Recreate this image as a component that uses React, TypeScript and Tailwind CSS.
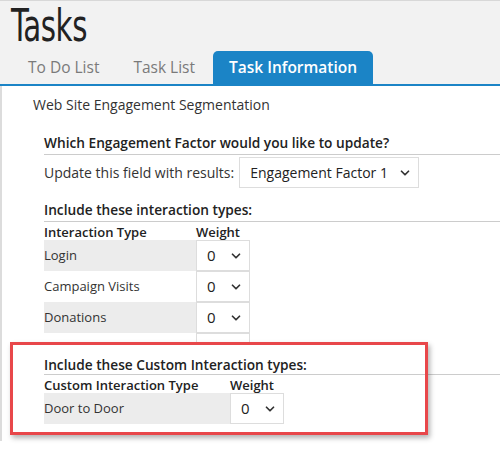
import { ChevronDown } from "lucide-react"

function Select({ value, className }: { value: string; className: string }) {
  return (
    <div className={`flex items-center justify-between whitespace-nowrap bg-white border border-[#dddddd] text-[#222] ${className}`}>
      <span>{value}</span>
      <ChevronDown size={14} strokeWidth={3} className="text-[#333]" />
    </div>
  )
}

const rows = ["Login", "Campaign Visits", "Donations"]

export default function App() {
  return (
    <div className="w-[500px] h-[458px] overflow-hidden bg-white text-[#333]" style={{ fontFamily: '"Open Sans", sans-serif' }}>
      <div className="bg-[#f2f2f2] border-t border-[#d8d8d8] border-b-2 border-b-[#1b84c6]">
        <div className="h-[50px] pl-[11px] pt-[1px]">
          <span
            className="inline-block origin-left scale-x-[0.74] text-[44px] leading-[48px] text-[#222] tracking-[-0.5px]"
            style={{ fontFamily: '"DejaVu Sans Condensed", "DejaVu Sans", sans-serif' }}
          >
            Tasks
          </span>
        </div>
        <div className="flex items-end pl-3 gap-[2px] h-[33px] text-[15.5px]">
          <div className="px-4 h-[32px] flex items-center text-[#7a7a7a]">To Do List</div>
          <div className="px-4 h-[32px] flex items-center text-[#7a7a7a]">Task List</div>
          <div className="px-4 h-[33px] flex items-center bg-[#1b84c6] text-white font-semibold text-[15.5px] rounded-t-[5px]">
            Task Information
          </div>
        </div>
      </div>

      <div className="border-l-2 border-[#dcdcdc] h-[355px] text-[14px]">
        <div className="h-[256px] overflow-hidden pl-[31px] pt-[9px]">
          <div className="leading-[20px]">Web Site Engagement Segmentation</div>

          <div className="pl-[11px] mt-[18px]">
            <div className="text-[13.7px] font-semibold leading-[20px] border-b border-[#cccccc] pb-[1px] text-[#222]">
              Which Engagement Factor would you like to update?
            </div>
            <div className="flex items-center gap-[5px] mt-[2px]">
              <span>Update this field with results:</span>
              <Select value="Engagement Factor 1" className="w-[180px] h-[31px] pl-[10px] pr-[6px]" />
            </div>

            <div className="text-[13.7px] font-semibold leading-[20px] border-b border-[#cccccc] pb-[1px] mt-[12px] text-[#222]">
              Include these interaction types:
            </div>
            <div className="flex text-[13px] font-semibold leading-[16px] mt-[2px] text-[#222]">
              <div className="w-[152px]">Interaction Type</div>
              <div>Weight</div>
            </div>
            {rows.map((r, i) => (
              <div key={r} className="flex h-[31px]">
                <div className={`w-[152px] flex items-center text-[13px] ${i % 2 === 0 ? "bg-[#ececec]" : "bg-white"}`}>{r}</div>
                <Select value="0" className="w-[54px] h-[31px] pl-[10px] pr-[6px] text-[15px]" />
              </div>
            ))}
            {/* next row, mostly hidden behind the highlighted section */}
            <div className="flex h-[31px]">
              <div className="w-[152px] bg-white" />
              <div className="w-[54px] h-[31px] bg-white border border-[#dddddd]" />
            </div>
          </div>
        </div>

        <div className="relative h-[99px]">
          <div className="pl-[42px] pt-[14px]">
            <div className="text-[13.7px] font-semibold leading-[18px] border-b border-[#cccccc] text-[#222]">
              Include these Custom Interaction types:
            </div>
            <div className="flex text-[13px] font-semibold leading-[16px] mt-[2px] text-[#222]">
              <div className="w-[186px]">Custom Interaction Type</div>
              <div>Weight</div>
            </div>
            <div className="flex h-[31px]">
              <div className="w-[186px] flex items-center text-[13px] bg-[#ececec]">Door to Door</div>
              <Select value="0" className="w-[54px] h-[31px] pl-[10px] pr-[6px] text-[15px]" />
            </div>
          </div>
          <div className="pointer-events-none absolute left-[8px] top-0 w-[418px] h-[93px] border-[3px] border-[#e8474a] shadow-[2px_3px_5px_rgba(0,0,0,0.3)]" />
        </div>
      </div>
    </div>
  )
}
